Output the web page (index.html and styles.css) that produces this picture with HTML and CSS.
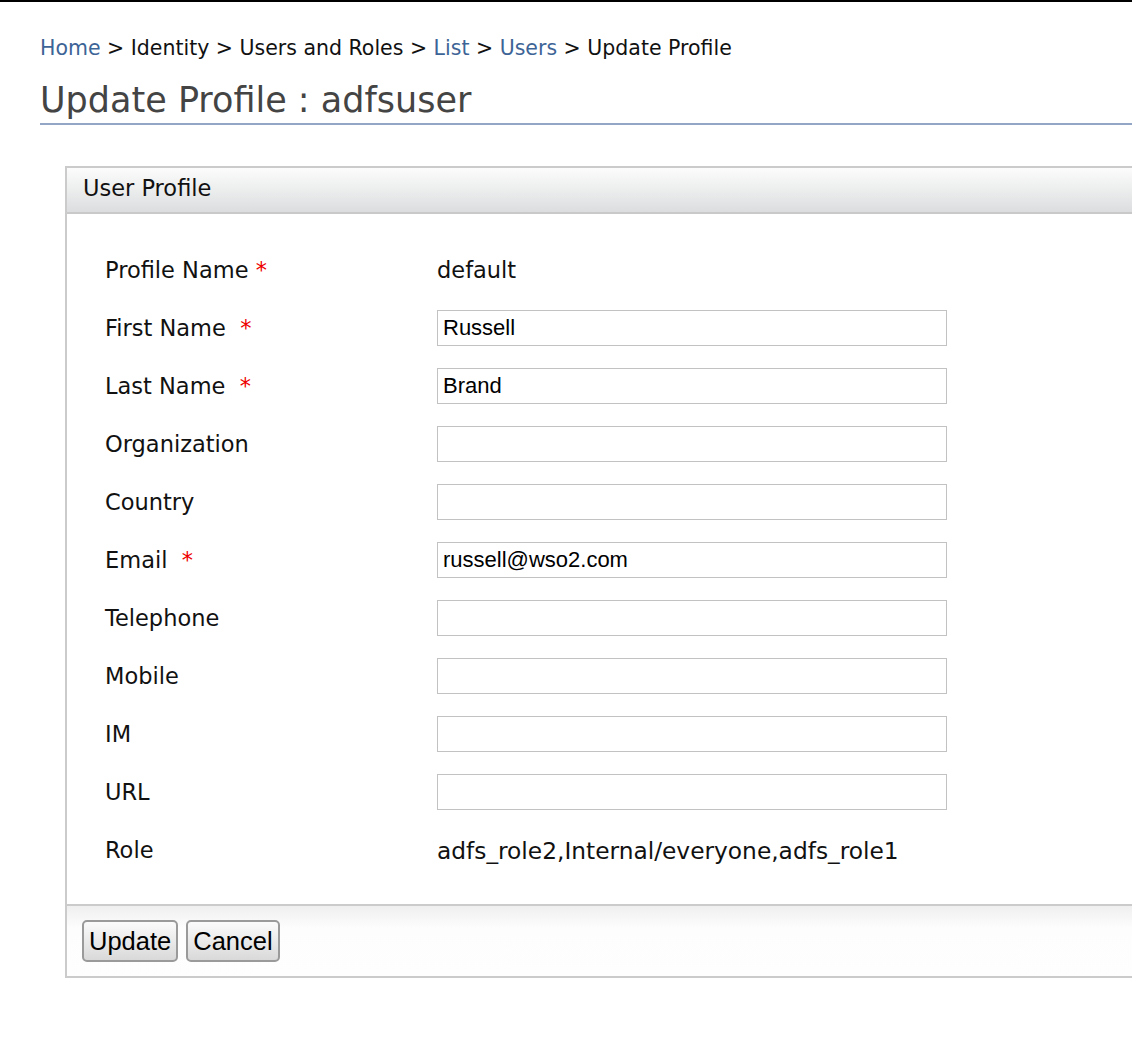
FILE: index.html
```html
<!DOCTYPE html>
<html>
<head>
<meta charset="utf-8">
<title>Update Profile</title>
<link rel="stylesheet" href="styles.css">
</head>
<body>
<div class="page">
  <div class="breadcrumb"><a href="#" class="crumb-link">Home</a> &gt; Identity &gt; Users and Roles &gt; <a href="#" class="crumb-link">List</a> &gt; <a href="#" class="crumb-link">Users</a> &gt; Update Profile</div>
  <h1 class="title">Update Profile : adfsuser</h1>
  <div class="box">
    <div class="box-header">User Profile</div>
    <div class="box-body">
      <div class="row"><div class="label">Profile Name <span class="req">*</span></div><div class="value">default</div></div>
      <div class="row"><div class="label">First Name &nbsp;<span class="req">*</span></div><div class="value"><input class="field" type="text" value="Russell"></div></div>
      <div class="row"><div class="label">Last Name &nbsp;<span class="req">*</span></div><div class="value"><input class="field" type="text" value="Brand"></div></div>
      <div class="row"><div class="label">Organization</div><div class="value"><input class="field" type="text" value=""></div></div>
      <div class="row"><div class="label">Country</div><div class="value"><input class="field" type="text" value=""></div></div>
      <div class="row"><div class="label">Email &nbsp;<span class="req">*</span></div><div class="value"><input class="field" type="text" value="russell@wso2.com"></div></div>
      <div class="row"><div class="label">Telephone</div><div class="value"><input class="field" type="text" value=""></div></div>
      <div class="row"><div class="label">Mobile</div><div class="value"><input class="field" type="text" value=""></div></div>
      <div class="row"><div class="label">IM</div><div class="value"><input class="field" type="text" value=""></div></div>
      <div class="row"><div class="label">URL</div><div class="value"><input class="field" type="text" value=""></div></div>
      <div class="row"><div class="label">Role</div><div class="value wide">adfs_role2,Internal/everyone,adfs_role1</div></div>
    </div>
    <div class="box-footer">
      <button class="btn" type="button">Update</button>
      <button class="btn" type="button">Cancel</button>
    </div>
  </div>
</div>
</body>
</html>
```
FILE: styles.css
```css
html, body {
  margin: 0;
  padding: 0;
  overflow: hidden;
  background: #fff;
}
body {
  border-top: 2px solid #000;
  font-family: "DejaVu Sans", sans-serif;
  color: #111;
}
.page {
  padding: 32px 0 0 40px;
}
.breadcrumb {
  font-size: 20.5px;
  line-height: 28px;
  color: #111;
}
.crumb-link {
  color: #3d6496;
  text-decoration: none;
}
.title {
  margin: 16px 0 0 0;
  font-weight: normal;
  font-size: 35px;
  line-height: 44px;
  color: #444;
  padding-bottom: 1px;
  border-bottom: 2px solid #94a6c6;
}
.box {
  margin: 41px 0 0 25px;
  border: 2px solid #cbcbcb;
  border-right: none;
}
.box-header {
  height: 44px;
  line-height: 40px;
  padding-left: 16px;
  font-size: 22.5px;
  color: #111;
  background: linear-gradient(#fcfcfc, #eceded 50%, #dcdddf);
  border-bottom: 2px solid #c9c9c9;
}
.box-body {
  padding: 27px 0 25px 38px;
}
.row {
  display: flex;
  align-items: center;
  height: 58px;
}
.label {
  width: 332px;
  font-size: 22.5px;
  white-space: pre;
}
.req {
  color: #e00;
}
.value {
  font-size: 22.5px;
}
.value.wide {
  font-size: 23.3px;
}
.field {
  box-sizing: border-box;
  width: 510px;
  height: 36px;
  margin: 0;
  border: 1px solid #c2c2c2;
  padding: 0 5px;
  font-family: "Liberation Sans", Arial, sans-serif;
  font-size: 22px;
  color: #000;
  background: #fff;
  outline: none;
}
.box-footer {
  border-top: 2px solid #cbcbcb;
  background: linear-gradient(#efefef, #fdfdfd 22px, #fefefe);
  padding: 14px 0 14px 15px;
  display: flex;
  gap: 8px;
}
.btn {
  height: 42px;
  margin: 0;
  padding: 0 5px;
  border: 2px solid #9a9a9a;
  border-radius: 5px;
  background: linear-gradient(#fbfbfb, #eaeaea 50%, #d9d9d9);
  font-family: "Liberation Sans", Arial, sans-serif;
  font-size: 25.5px;
  color: #000;
}
```
